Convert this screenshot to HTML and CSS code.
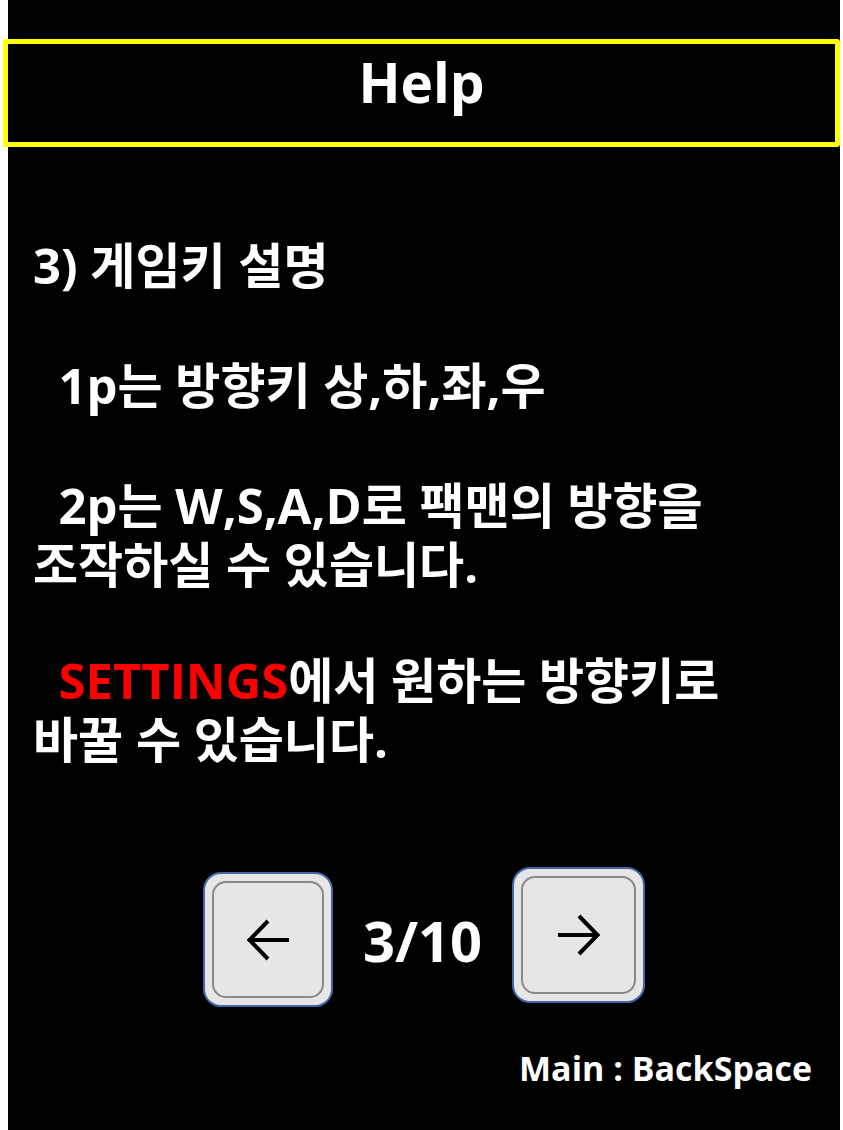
FILE: index.html
```html
<!DOCTYPE html>
<html lang="ko">
<head>
<meta charset="utf-8">
<title>Help</title>
<link rel="stylesheet" href="styles.css">
</head>
<body>
<div class="screen">
  <header class="title-box"><h1 class="title">Help</h1></header>
  <main class="content">
    <p class="para">3) 게임키 설명</p>
    <p class="para">  1p는 방향키 상,하,좌,우</p>
    <p class="para">  2p는 W,S,A,D로 팩맨의 방향을<br>조작하실 수 있습니다.</p>
    <p class="para para-last">  <span class="red">SETTINGS</span>에서 원하는 방향키로<br>바꿀 수 있습니다.</p>
  </main>
  <nav class="pager">
    <div class="key key-left"><div class="key-inner">
      <svg width="44" height="42" viewBox="0 0 44 42"><path d="M43 21H5M22 2L3.5 21L22 40" fill="none" stroke="#000" stroke-width="4"/></svg>
    </div></div>
    <div class="count">3/10</div>
    <div class="key key-right"><div class="key-inner">
      <svg width="44" height="42" viewBox="0 0 44 42"><path d="M1 21H39M22 2L40.5 21L22 40" fill="none" stroke="#000" stroke-width="4"/></svg>
    </div></div>
  </nav>
  <footer class="footer">Main : BackSpace</footer>
</div>
</body>
</html>
```
FILE: styles.css
```css
html, body {
  margin: 0;
  padding: 0;
  background: #ffffff;
}
body {
  font-family: "Open Sans", "Noto Sans CJK KR", sans-serif;
  font-weight: 700;
  color: #ffffff;
}
.screen {
  margin-left: 8px;
  width: 832px;
  height: 1130px;
  background: #000000;
  padding-top: 39px;
  box-sizing: border-box;
}
.title-box {
  margin-left: -5px;
  width: 837px;
  height: 108px;
  box-sizing: border-box;
  border: 5px solid #ffff00;
  border-radius: 3px;
  padding-top: 10px;
}
.title {
  margin: 0;
  text-align: center;
  font-size: 55px;
  line-height: 55px;
  font-weight: 700;
}
.content {
  margin-top: 89px;
  padding-left: 25px;
}
.para {
  margin: 0 0 61px 0;
  font-size: 49px;
  line-height: 59px;
  white-space: pre-wrap;
}
.para-last {
  margin-top: -4px;
  margin-bottom: 0;
}
.red {
  color: #ff0000;
}
.pager {
  margin-top: 98px;
  display: flex;
  justify-content: center;
  align-items: center;
  gap: 30px;
}
.key {
  width: 130px;
  height: 135px;
  box-sizing: border-box;
  background: #e6e6e6;
  border: 2px solid #4466a6;
  border-radius: 18px;
  padding: 7px;
}
.key-right {
  width: 133px;
  height: 136px;
  margin-bottom: 9px;
}
.key-inner {
  height: 100%;
  box-sizing: border-box;
  border: 2px solid #8a8a8a;
  border-radius: 14px;
  display: flex;
  align-items: center;
  justify-content: center;
}
.key-inner svg {
  display: block;
}
.count {
  font-size: 56px;
  line-height: 60px;
}
.footer {
  margin-top: 40px;
  padding-right: 28px;
  text-align: right;
  font-size: 34px;
  line-height: 33px;
}
```
